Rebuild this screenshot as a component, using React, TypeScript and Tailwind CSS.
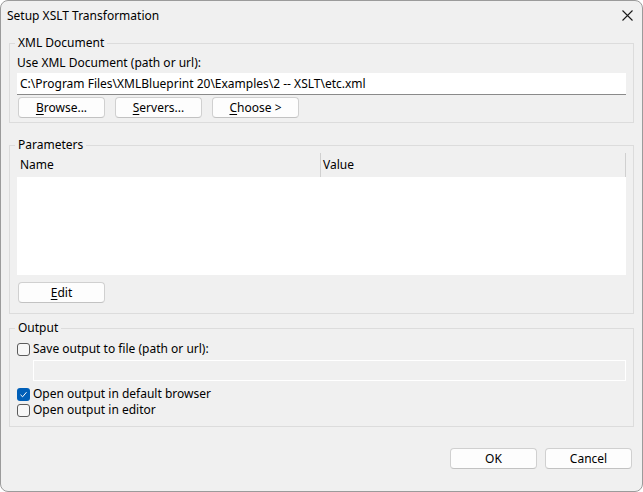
import type { ReactNode } from "react";

const font = { fontFamily: '"Noto Sans", "Segoe UI", sans-serif' };

function Button({ children, className = "" }: { children: ReactNode; className?: string }) {
  return (
    <button
      className={`flex h-[21px] w-[87px] items-center justify-center rounded-[4px] border border-[#d0d0d0] border-b-[#c2c2c2] bg-[#fdfdfd] text-[12px] leading-none text-black ${className}`}
    >
      {children}
    </button>
  );
}

function Group({ title, children, className = "" }: { title: string; children: ReactNode; className?: string }) {
  return (
    <fieldset className={`border border-[#dcdcdc] px-[7px] ${className}`}>
      <legend className="-ml-[2px] px-[3px] text-[12px] leading-[16px]">{title}</legend>
      {children}
    </fieldset>
  );
}

function Checkbox({ checked, label }: { checked?: boolean; label: string }) {
  return (
    <label className="flex h-[16px] items-center gap-[3px]">
      {checked ? (
        <span className="flex h-[13px] w-[13px] items-center justify-center rounded-[3px] bg-[#005fb8]">
          <svg width="9" height="9" viewBox="0 0 9 9" fill="none">
            <path d="M1.5 4.8 L3.6 6.8 L7.5 2.2" stroke="white" strokeWidth="1" />
          </svg>
        </span>
      ) : (
        <span className="h-[13px] w-[13px] rounded-[3px] border border-[#5b5b5b] bg-[#f7f7f7]" />
      )}
      <span>{label}</span>
    </label>
  );
}

export default function App() {
  return (
    <div
      className="flex h-[492px] w-[643px] flex-col overflow-hidden rounded-lg border border-[#9b9b9b] bg-[#f0f0f0] text-[12px] text-black"
      style={font}
    >
      {/* Title bar */}
      <div className="flex h-[29px] shrink-0 items-center justify-between pl-[6px] pr-[9px]">
        <span className="text-[12px]">Setup XSLT Transformation</span>
        <svg width="11" height="11" viewBox="0 0 11 11" className="mt-[-1px]">
          <path d="M0.5 0.5 L10.5 10.5 M10.5 0.5 L0.5 10.5" stroke="#1a1a1a" strokeWidth="1.1" />
        </svg>
      </div>

      <div className="flex flex-col px-[8px]">
        <Group title="XML Document" className="mt-[5px] pb-[4px]">
          <div className="mt-[4px] leading-[16px]">Use XML Document (path or url):</div>
          <div className="mt-[2px] flex h-[22px] items-center border-b border-b-[#8a8a8a] bg-white px-[3px]">
            C:\Program Files\XMLBlueprint 20\Examples\2 -- XSLT\etc.xml
          </div>
          <div className="mt-[2px] flex gap-[10px] pl-[1px]">
            <Button className="w-[87px]">
              <u className="underline-offset-2">B</u>rowse...
            </Button>
            <Button className="w-[86px]">
              <u className="underline-offset-2">S</u>ervers...
            </Button>
            <Button className="w-[87px]">
              <u className="underline-offset-2">C</u>hoose &gt;
            </Button>
          </div>
        </Group>

        <Group title="Parameters" className="mt-[14px] pb-[10px]">
          <div className="flex flex-col">
            <div className="flex h-[24px] border-r border-r-[#d0d0d0]">
              <div className="flex w-[303px] items-center pl-[3px]">Name</div>
              <div className="flex flex-1 items-center border-l border-l-[#d0d0d0] pl-[2px]">Value</div>
            </div>
            <div className="h-[98px] bg-white" />
          </div>
          <Button className="mt-[7px] ml-[1px]">
            <u className="underline-offset-2">E</u>dit
          </Button>
        </Group>

        <Group title="Output" className="mt-[6px] pb-[8px]">
          <div className="mt-[5px] flex flex-col">
            <Checkbox label="Save output to file (path or url):" />
            <div className="mt-[3px] ml-[16px] h-[21px] border border-white" />
            <div className="mt-[5px] flex flex-col">
              <Checkbox checked label="Open output in default browser" />
              <Checkbox label="Open output in editor" />
            </div>
          </div>
        </Group>
      </div>

      <div className="mt-auto mb-[22px] flex justify-end gap-[8px] pr-[10px]">
        <Button>OK</Button>
        <Button>Cancel</Button>
      </div>
    </div>
  );
}
